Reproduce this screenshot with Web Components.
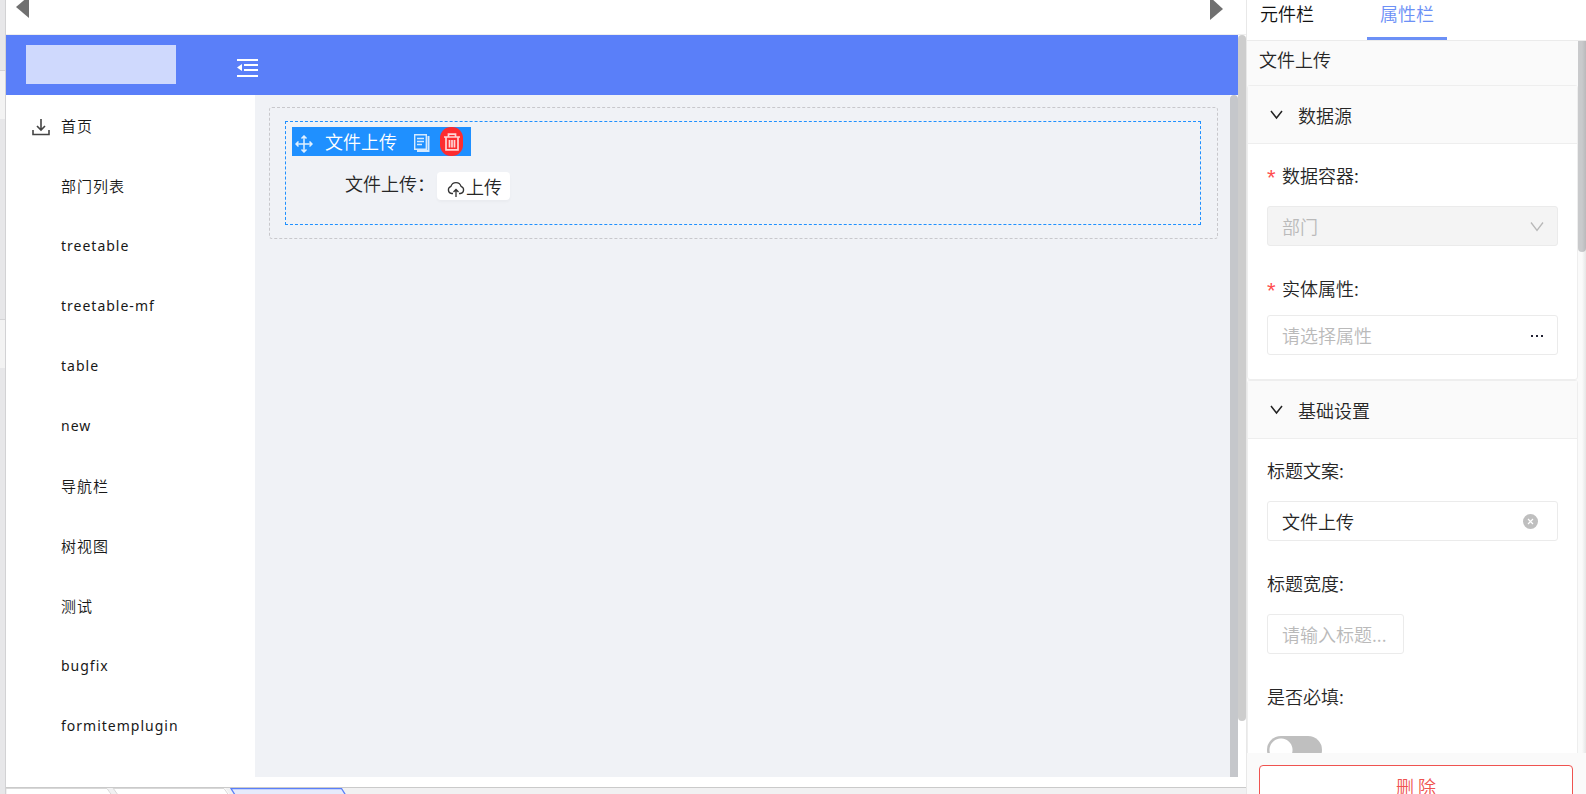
<!DOCTYPE html>
<html lang="zh-CN">
<head>
<meta charset="utf-8">
<title>页面设计器</title>
<style>
html,body{height:100%}
body{margin:0;overflow:hidden;font-family:"Noto Sans CJK SC DemiLight","Noto Sans CJK SC",sans-serif;font-weight:300;font-size:18px;color:#262626}
</style>
</head>
<body>
<designer-app></designer-app>
<script>
const define=(name,html,setup)=>{
  const t=document.createElement('template');
  t.innerHTML=html;
  customElements.define(name,class extends HTMLElement{
    constructor(){
      super();
      this.attachShadow({mode:'open'}).append(t.content.cloneNode(true));
      if(setup)setup(this,this.shadowRoot);
    }
  });
};

define('edge-strip',`
<style>
:host{display:flex;flex-direction:column;box-sizing:border-box;width:6px;border-right:1px solid #d2d2d4;background:#e7e7e9}
i{flex:none;height:48px;border-top:1px solid #d4d4d6;background:#f3f3f3}
.a{height:70px;background:none;border:0}
.b{height:200px;background:none;border:0}
</style><i class="a"></i><i></i><i class="b"></i><i></i>`);

define('page-scroller',`
<style>
:host{display:flex;justify-content:space-between;height:34px;padding:0 22px 0 10px;border-bottom:1px solid #eee;background:#fff;flex:none}
button{border:0;padding:0;background:none;display:block;width:14px;height:22px}
svg{display:block}
</style>
<button aria-label="向左"><svg width="14" height="22"><path d="M0 7 13-4V18z" fill="#707070"/></svg></button>
<button aria-label="向右"><svg width="14" height="22"><path d="M0-3V20L13 9z" fill="#707070"/></svg></button>`);

define('app-header',`
<style>
:host{display:flex;align-items:flex-start;height:60px;background:#5a7ff9;flex:none}
.logo{width:150px;height:39px;margin:10px 0 0 20px;background:#cfd9fd}
button{border:0;background:none;padding:0;margin:23px 0 0 61px;height:20px}
svg{display:block}
</style>
<div class="logo"></div>
<button aria-label="收起菜单"><svg width="21" height="20" fill="#fff"><path d="M0 1h21v2H0zM7 6h14v2H7zM7 11h14v2H7zM0 17h21v2H0zM5 6v7L0 9.500z"/></svg></button>`);

define('menu-item',`
<style>
:host{display:block;height:60px}
a{display:flex;align-items:center;height:60px;padding-left:26px;color:#181818;text-decoration:none;font-size:15px;line-height:24px;letter-spacing:1px}
:host([lang=en]) a{font-family:"Noto Sans",sans-serif;font-size:14px;font-weight:400}
.icon{width:29px;height:20px}
</style>
<a href="#"><div class="icon"><slot name="icon"></slot></div><span><slot></slot></span></a>`);

define('side-menu',`
<style>
:host{display:block;width:249px;flex:none;background:#fff;padding-top:1px;box-sizing:border-box}
svg{display:block}
</style>
<nav>
<menu-item><svg slot="icon" width="18" height="20" fill="none" stroke="#444" stroke-width="1.600"><path d="M1 14v4.500h16V14M9 3v10.500M5 10l4 4 4-4"/></svg>首页</menu-item>
<menu-item>部门列表</menu-item>
<menu-item lang="en">treetable</menu-item>
<menu-item lang="en">treetable-mf</menu-item>
<menu-item lang="en">table</menu-item>
<menu-item lang="en">new</menu-item>
<menu-item>导航栏</menu-item>
<menu-item>树视图</menu-item>
<menu-item>测试</menu-item>
<menu-item lang="en">bugfix</menu-item>
<menu-item lang="en">formitemplugin</menu-item>
</nav>`);

define('widget-toolbar',`
<style>
:host{display:flex;align-items:center;width:179px;height:29px;background:#1f90ff;color:#fff}
span{margin-left:12px;line-height:26px;width:74px;padding-bottom:2px}
button{border:0;padding:0;background:none;height:29px;display:flex;align-items:center;justify-content:center}
.move{margin:4px 0 0 3px;width:18px}
.copy{margin-left:14px;width:18px;padding-top:2px}
.del{margin-left:9px;width:23px;border-radius:11px;background:#fd2c2f}
</style>
<button class="move" aria-label="移动"><svg width="18" height="18" viewBox="0 0 18 18" fill="none" stroke="#e0f0ff" stroke-width="1.500"><path d="M9 1v16M1 9h16M6.500 3.500 9 1l2.500 2.500M6.500 14.500 9 17l2.500-2.500M3.500 6.500 1 9l2.500 2.500M14.500 6.500 17 9l-2.500 2.500"/></svg></button>
<span>文件上传</span>
<button class="copy" aria-label="复制"><svg width="16" height="18" viewBox="0 0 16 18" fill="none" stroke="#d5eaff" stroke-width="1.400"><path d="M.7.700h11.600v14.600H.700zM3 4.500h7M3 7.500h7M3 10.500h5"/><path d="M14.500 2v15H3" stroke-width="2"/></svg></button>
<button class="del" aria-label="删除"><svg width="18" height="18" viewBox="0 0 18 18" fill="none" stroke="#ffd6d6" stroke-width="1.700"><path d="M1 4h16M5.500 4V1.200h7V4M3 4v12.800h12V4M6.500 7v7.500M9 7v7.500M11.500 7v7.500"/></svg></button>`);

define('upload-field',`
<style>
:host{display:flex;align-items:flex-start;padding:12px 0 0 53px}
label{line-height:31px;width:92px;white-space:nowrap}
button{font:inherit;color:inherit;display:flex;align-items:center;width:73px;height:28px;margin-top:4px;padding:0 0 0 10px;border:0;border-radius:4px;background:#fff;box-shadow:0 2px 3px #00000008;white-space:nowrap}
svg{flex:none;margin-top:6px}
button span{margin-left:1px;line-height:28px}
</style>
<label for="up">文件上传：</label>
<button id="up"><svg width="18" height="18" viewBox="0 0 18 18" fill="none" stroke="#333" stroke-width="1.300"><path d="M6 13.500H4.600A3.700 3.700 0 0 1 4 6.300a5.200 5.200 0 0 1 10 0 3.700 3.700 0 0 1-.6 7.200H12M9 17V9.500M6.500 12 9 9.500l2.500 2.500"/></svg><span>上传</span></button>`);

define('design-canvas',`
<style>
:host{display:block;flex:1;min-width:0;background:#f0f2f6;padding:12px 12px 0 14px;box-sizing:border-box}
.outer{border:1px dashed #c8c8cc;border-radius:3px;padding:13px 16px 13px 15px}
.inner{border:1px dashed #1f90ff;height:97px;padding:5px 0 0 6px}
</style>
<div class="outer"><div class="inner"><widget-toolbar></widget-toolbar><upload-field></upload-field></div></div>`);

define('page-tabs',`
<style>
:host{display:block;height:7px;overflow:hidden;background:#f1f1f2;border-top:1px solid #cacaca;box-sizing:border-box;flex:none}
svg{display:block}
</style>
<svg width="340" height="6"><path d="M1 0H101L106 7H1zM107 0H219L224 7H112z" fill="#fff"/><path d="M0 .5H101l5 7M107 0l5 7M107 .5H218l5 7" fill="none" stroke="#d8d8d8"/><path d="M225 .5H335.500l5 8H230z" fill="#e6ebfc" stroke="#5a7ff9" stroke-width="1.300"/></svg>`);

define('work-area',`
<style>
:host{display:flex;flex-direction:column;min-width:0;height:100vh;background:#fff}
.view{flex:1;min-height:0;display:flex;margin-bottom:10px}
.page{flex:1;min-width:0;display:flex;flex-direction:column}
.body{flex:1;min-height:0;display:flex}
.bar{width:8px;flex:none;border-radius:4px 4px 0 0;background:#c5c7cb}
.outer{background:#cdcdcd;border-radius:4px;margin-bottom:56px}
</style>
<page-scroller></page-scroller>
<div class="view"><div class="page"><app-header></app-header>
<div class="body"><side-menu></side-menu><design-canvas></design-canvas><div class="bar"></div></div></div>
<div class="bar outer"></div></div>
<page-tabs></page-tabs>`);

define('panel-tabs',`
<style>
:host{display:flex;height:40px;flex:none;border-bottom:1px solid #ebebeb;background:#fff}
button{font:inherit;color:#111;height:40px;width:80px;padding:0 0 12px;border:0;border-bottom:3px solid transparent;background:none;line-height:24px;margin-right:40px;box-sizing:border-box}
button.on{color:#6c90f6;border-color:#6c90f6}
</style>
<button>元件栏</button><button class="on">属性栏</button>`);

define('setting-group',`
<style>
:host{display:block;border:1px solid #eee;border-radius:3px;background:#fff}
button{font:inherit;color:inherit;display:flex;align-items:center;width:100%;height:58px;border:0;border-bottom:1px solid #eee;background:#fafafa;padding:0 0 0 22px}
span{margin-left:15px;line-height:28px}
.body{padding:15px 19px 0}
</style>
<button aria-expanded="true"><svg width="13" height="10" fill="none" stroke="#222" stroke-width="1.500"><path d="M1 1l5.500 7L12 1"/></svg><span class="title"></span></button>
<div class="body"><slot></slot></div>`,(h,r)=>{r.querySelector('.title').textContent=h.getAttribute('heading')});

define('setting-field',`
<style>
:host{display:block}
label{display:flex;align-items:center;height:32px;line-height:32px}
label i{display:none;font-style:normal;color:#ff4d4f;width:15px;font-family:"Liberation Sans",sans-serif;font-size:22px;height:24px;line-height:30px}
:host([required]) i{display:block}
.control{display:flex;align-items:center;position:relative;margin:15px 0 26px}
:host([tight]) .control{margin:11px 0 24px}
input,select{font:inherit;color:#262626;width:100%;height:40px;box-sizing:border-box;border:1px solid #ebebeb;border-radius:3px;padding:0 14px;background:#fff;appearance:none;outline:0;opacity:1}
:host([short]) input{width:137px}
input::placeholder{color:#bababa;opacity:1}
select:disabled{background:#f4f4f4;color:#bababa}
.tail{position:absolute;right:14px;height:20px;display:flex;align-items:center;border:0;background:none;padding:2px 0 0}
.tail.reset{right:20px;padding:0}
input[type=checkbox]{width:55px;height:28px;border:0;border-radius:14px;background:radial-gradient(circle at 14px 14px,#fff 11px,#bfbfbf 12px);margin:9px 0 0;padding:0}
</style>
<label for="c"><i>*</i><span></span></label><div class="control"></div>`,(h,r)=>{
  r.querySelector('span').textContent=h.getAttribute('label')+':';
  const v=h.getAttribute('value')||'',p=h.getAttribute('placeholder')||'';
  const input=`<input id="c" value="${v}" placeholder="${p}">`;
  r.querySelector('.control').innerHTML={
    select:`<select id="c" disabled><option>${v}</option></select><div class="tail"><svg width="14" height="12" fill="none" stroke="#b8b8b8" stroke-width="1.300"><path d="M1 1.500l6 8 6-8"/></svg></div>`,
    pick:input+`<button class="tail" aria-label="选择"><svg width="14" height="4" fill="#223"><path d="M1 1h2v2H1zM6 1h2v2H6zM11 1h2v2H11z"/></svg></button>`,
    clear:input+`<button class="tail reset" aria-label="清除"><svg width="15" height="15"><circle cx="7.500" cy="7.500" r="7.500" fill="#bfbfbf"/><path d="M5 5l5 5M10 5l-5 5" stroke="#fff" stroke-width="1.200"/></svg></button>`,
    text:input,
    switch:`<input id="c" type="checkbox" role="switch">`
  }[h.getAttribute('kind')];
});

define('property-panel',`
<style>
:host{display:flex;flex-direction:column;height:100vh;background:#fff;border-left:1px solid #e8e8e8;box-sizing:border-box}
.scroll{flex:1;min-height:0;display:flex;overflow:hidden}
.content{flex:1;min-width:0;background:#fafafa}
h2{font:inherit;margin:0;height:44px;line-height:37px;padding-left:12px}
.bar{width:8px;flex:none;background:linear-gradient(90deg,#fafafa 4px,#e6e6e6)}
.bar i{display:block;height:211px;background:linear-gradient(90deg,#c9cacc 4px,#b9b9bb);border-radius:0 0 4px 4px}
.foot{flex:none;display:flex;height:41px;overflow:hidden;background:#fafafa;padding:0 13px 0 12px}
.foot button{flex:1;font:inherit;height:44px;margin-top:12px;border:1px solid #ef5350;border-radius:4px;background:#fff;color:#ef5350;line-height:40px;padding:0 0 2px}
</style>
<panel-tabs></panel-tabs>
<div class="scroll"><div class="content">
<h2>文件上传</h2>
<setting-group heading="数据源">
<setting-field kind="select" label="数据容器" value="部门" required></setting-field>
<setting-field kind="pick" label="实体属性" placeholder="请选择属性" required tight></setting-field>
</setting-group>
<setting-group heading="基础设置">
<setting-field kind="clear" label="标题文案" value="文件上传"></setting-field>
<setting-field kind="text" label="标题宽度" placeholder="请输入标题..." short></setting-field>
<setting-field kind="switch" label="是否必填"></setting-field>
</setting-group>
</div><div class="bar"><i></i></div></div>
<div class="foot"><button>删 除</button></div>`);

define('designer-app',`
<style>:host{display:grid;grid-template-columns:6px minmax(0,1fr) 340px;height:100vh}</style>
<edge-strip></edge-strip><work-area></work-area><property-panel></property-panel>`);
</script>
</body>
</html>
